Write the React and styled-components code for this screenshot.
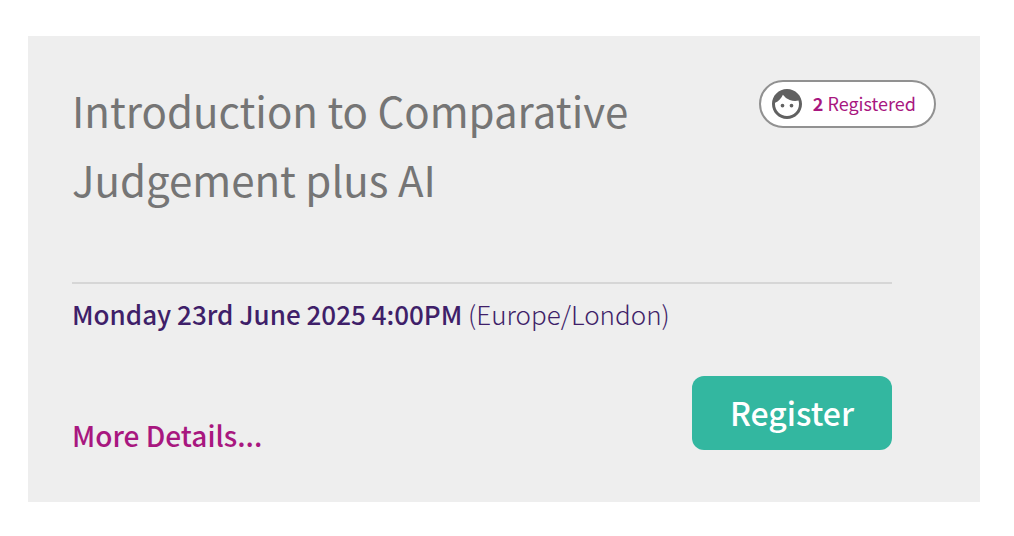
import React from 'react';
import styled, { createGlobalStyle } from 'styled-components';
import { MdFace } from 'react-icons/md';

const GlobalStyle = createGlobalStyle`
  * {
    box-sizing: border-box;
  }

  body {
    margin: 0;
    background: #ffffff;
    font-family: 'Noto Sans CJK SC', 'Noto Sans', sans-serif;
  }
`;

const Page = styled.main`
  padding: 36px 34px 34px 28px;
`;

const Card = styled.article`
  background: #eeeeee;
  padding: 39px 44px 52px;
`;

const Header = styled.header`
  display: flex;
  align-items: flex-start;
  justify-content: space-between;
  gap: 32px;
`;

const Title = styled.h2`
  flex: 1;
  max-width: 600px;
  margin: 0;
  font-size: 42px;
  font-weight: 400;
  line-height: 69px;
  color: #757575;
`;

const Badge = styled.div`
  display: flex;
  align-items: center;
  gap: 8px;
  height: 48px;
  margin-top: 5px;
  padding: 0 18px 2px 8px;
  border: 2px solid #919191;
  border-radius: 24px;
  background: #ffffff;
  color: #a8177f;
  font-size: 18px;
  line-height: 24px;
  white-space: nowrap;

  svg {
    margin-top: 2px;
    color: #616161;
  }
`;

const Body = styled.div`
  margin: 69px 44px 0 0;
  padding-top: 12px;
  border-top: 2px solid #d6d6d6;
`;

const EventTime = styled.p`
  margin: 0;
  font-size: 26px;
  font-weight: 300;
  line-height: 36px;
  color: #3f1f69;
`;

const Strong = styled.strong`
  font-weight: ${({ $weight }) => $weight || 500};
`;

const Actions = styled.div`
  display: flex;
  align-items: flex-end;
  justify-content: space-between;
  margin-top: 44px;
`;

const DetailsLink = styled.a`
  font-size: 28px;
  font-weight: 500;
  line-height: 30px;
  color: #a8177f;
  text-decoration: none;

  &:hover {
    text-decoration: underline;
  }
`;

const RegisterButton = styled.button`
  min-width: 200px;
  height: 74px;
  padding: 0 24px 2px;
  border: none;
  border-radius: 12px;
  background: #33b7a0;
  color: #ffffff;
  font-family: inherit;
  font-size: 32px;
  font-weight: 500;
  cursor: pointer;

  &:hover {
    background: #2ba48f;
  }
`;

const App = () => (
  <>
    <GlobalStyle />
    <Page>
      <Card>
        <Header>
          <Title>Introduction to Comparative Judgement plus AI</Title>
          <Badge>
            <MdFace size={36} aria-hidden="true" />
            <span>
              <Strong $weight={700}>2</Strong> Registered
            </span>
          </Badge>
        </Header>
        <Body>
          <EventTime>
            <Strong>Monday 23rd June 2025 4:00PM</Strong> (Europe/London)
          </EventTime>
          <Actions>
            <DetailsLink href="#details">More Details...</DetailsLink>
            <RegisterButton type="button">Register</RegisterButton>
          </Actions>
        </Body>
      </Card>
    </Page>
  </>
);

export default App;
